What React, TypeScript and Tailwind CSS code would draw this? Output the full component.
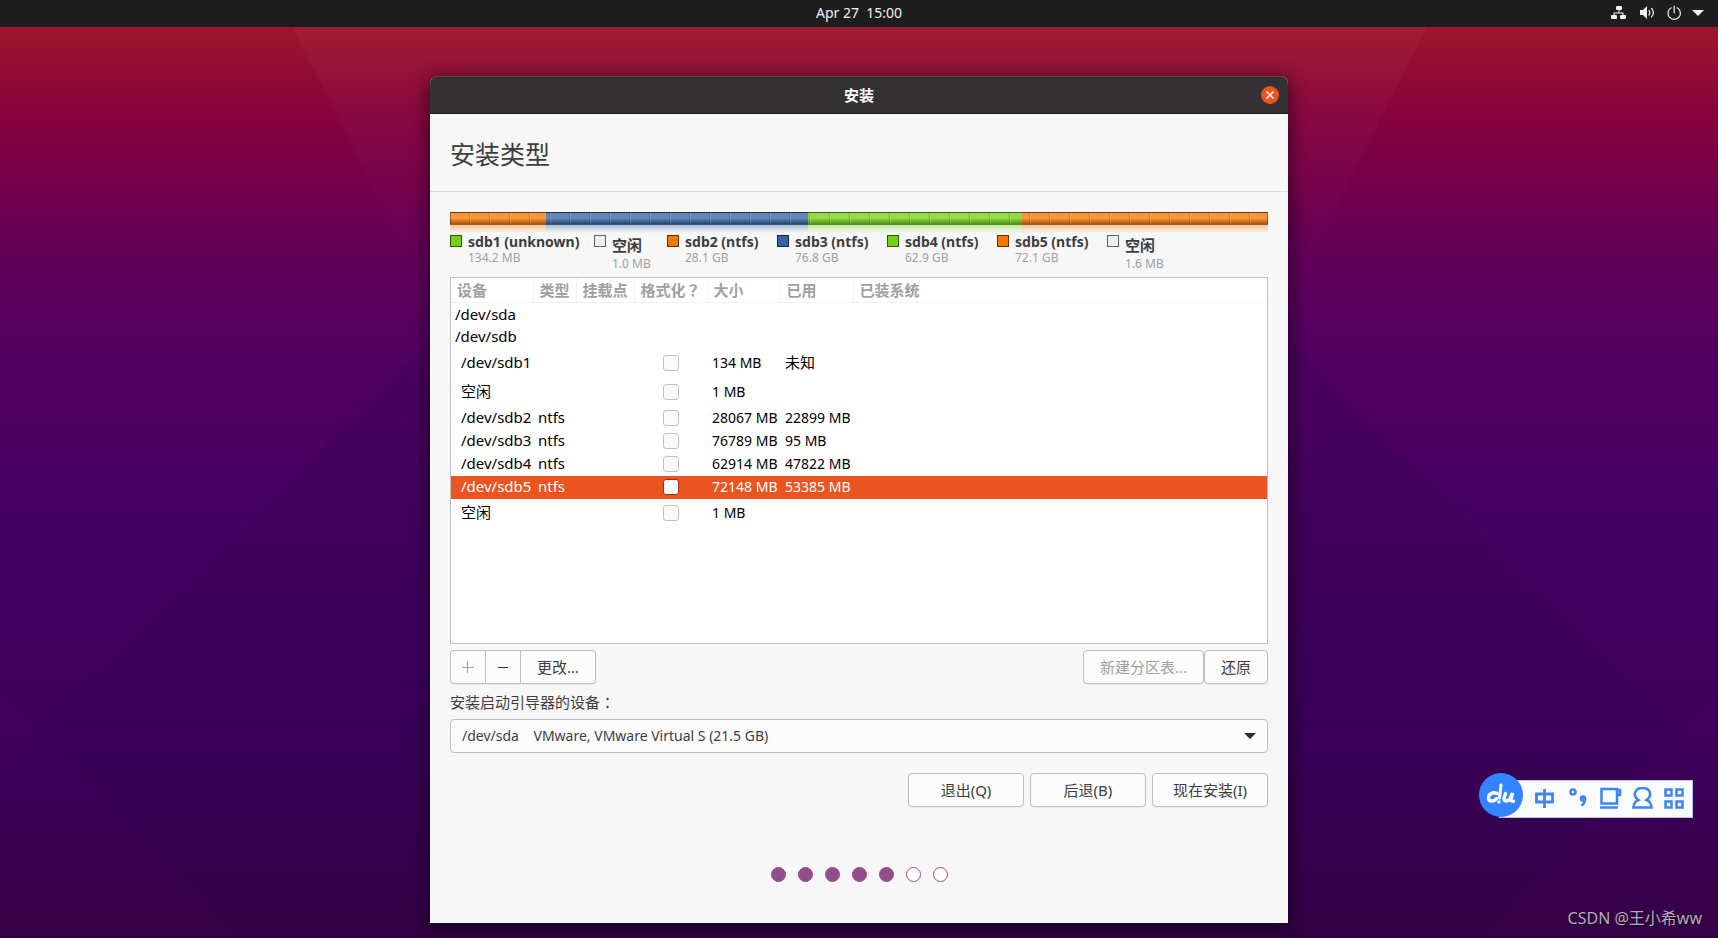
import React, { useState } from 'react';

interface Partition {
  device: string;
  type?: string;
  size?: string;
  used?: string;
  level: 'disk' | 'partition';
  tall?: boolean;
}

const partitions: Partition[] = [
  { device: '/dev/sda', level: 'disk' },
  { device: '/dev/sdb', level: 'disk' },
  { device: '/dev/sdb1', level: 'partition', size: '134 MB', used: '未知', tall: true },
  { device: '空闲', level: 'partition', size: '1 MB', tall: true },
  { device: '/dev/sdb2', level: 'partition', type: 'ntfs', size: '28067 MB', used: '22899 MB' },
  { device: '/dev/sdb3', level: 'partition', type: 'ntfs', size: '76789 MB', used: '95 MB' },
  { device: '/dev/sdb4', level: 'partition', type: 'ntfs', size: '62914 MB', used: '47822 MB' },
  { device: '/dev/sdb5', level: 'partition', type: 'ntfs', size: '72148 MB', used: '53385 MB' },
  { device: '空闲', level: 'partition', size: '1 MB', tall: true },
];

const legend = [
  { name: 'sdb1 (unknown)', size: '134.2 MB', color: 'bg-[#73d216]' },
  { name: '空闲', size: '1.0 MB', color: 'bg-[#eeeeec]', free: true },
  { name: 'sdb2 (ntfs)', size: '28.1 GB', color: 'bg-[#f57900]' },
  { name: 'sdb3 (ntfs)', size: '76.8 GB', color: 'bg-[#3465a4]' },
  { name: 'sdb4 (ntfs)', size: '62.9 GB', color: 'bg-[#73d216]' },
  { name: 'sdb5 (ntfs)', size: '72.1 GB', color: 'bg-[#f57900]' },
  { name: '空闲', size: '1.6 MB', color: 'bg-[#eeeeec]', free: true },
];

const segments = [
  { color: 'bg-[#f57900]', share: 96 },
  { color: 'bg-[#3465a4]', share: 262 },
  { color: 'bg-[#73d216]', share: 214 },
  { color: 'bg-[#f57900]', share: 246 },
];

const columns = [
  { label: '设备', width: 'w-[82px]' },
  { label: '类型', width: 'w-[43px]' },
  { label: '挂载点', width: 'w-[58px]' },
  { label: '格式化', mark: '？', width: 'w-[73px]' },
  { label: '大小', width: 'w-[73px]' },
  { label: '已用', width: 'w-[73px]' },
  { label: '已装系统', width: '' },
];

const buttonStyles =
  'h-[34px] rounded border border-[#bfbfbf] bg-[#fcfcfc] text-[15px] text-[#3d3d3d] shadow-[0_1px_1px_rgba(0,0,0,0.05)] disabled:text-[#a0a0a0]';

const Wallpaper: React.FC = () => (
  <svg
    className="absolute inset-0 -z-10 h-full w-full"
    viewBox="0 0 1718 938"
    preserveAspectRatio="none"
    aria-hidden="true"
  >
    <defs>
      <linearGradient id="sky" x1="0" y1="0" x2="0" y2="1">
        <stop offset="0.02" stopColor="#a01628" />
        <stop offset="0.06" stopColor="#951130" />
        <stop offset="0.12" stopColor="#88033c" />
        <stop offset="0.2" stopColor="#74004a" />
        <stop offset="0.28" stopColor="#600059" />
        <stop offset="0.38" stopColor="#520062" />
        <stop offset="0.56" stopColor="#450062" />
        <stop offset="0.76" stopColor="#3e005c" />
        <stop offset="0.88" stopColor="#3a0053" />
        <stop offset="1" stopColor="#360046" />
      </linearGradient>
      <linearGradient id="facet" x1="0" y1="0" x2="0" y2="1">
        <stop offset="0" stopColor="#fff" stopOpacity="0.03" />
        <stop offset="1" stopColor="#fff" stopOpacity="0" />
      </linearGradient>
    </defs>
    <rect width="1718" height="938" fill="url(#sky)" />
    <path d="M292 27 L430 300 L1290 300 L1427 27 Z" fill="url(#facet)" />
    <path d="M40 732 L427 343 H1291 L1678 732 L1480 938 H240 Z" fill="#1c0040" fillOpacity="0.13" />
    <path d="M0 767 L40 732 L0 698 Z M1718 767 L1678 732 L1718 698 Z" fill="#52005c" fillOpacity="0.15" />
  </svg>
);

const TopBar: React.FC = () => (
  <header className="grid h-[27px] grid-cols-3 items-center bg-[#1d1d1d] px-[14px] pb-0.5 text-[#f2f2f2]">
    <span />
    <time className="text-center text-sm">Apr 27&nbsp; 15:00</time>
    <div className="flex items-center justify-end gap-2">
      <svg width="73" height="16" viewBox="0 0 73 16" aria-hidden="true">
        <g fill="#f2f2f2">
          <rect x="5" y="1" width="6" height="4" rx="1" />
          <rect x="0" y="10" width="6" height="4" rx="1" />
          <rect x="9" y="10" width="6" height="4" rx="1" />
          <path d="M7.5 5h1v2.5h4V10h-1V8.500h-8V10h-1V7.500h5z" />
          <path d="M29 5h3l4-4v13l-4-4h-3z" />
        </g>
        <g fill="none" stroke="#f2f2f2" strokeWidth="1.200" strokeLinecap="round">
          <path d="M38 5.500q1.600 2 0 4.500" />
          <path d="M40.500 3.500q3.600 4 0 8.500" />
          <path d="M60.200 2.800a6.200 6.200 0 1 0 6 0M63.200 1v7" />
        </g>
      </svg>
      <svg width="12" height="6" viewBox="0 0 12 6" aria-hidden="true">
        <path d="M0 0h12L6 6z" fill="#f2f2f2" />
      </svg>
    </div>
  </header>
);

const DiskBar: React.FC = () => (
  <div className="relative">
    <div className="flex h-[13px]">
      {segments.map((segment, index) => (
        <div key={index} className={segment.color} style={{ flexGrow: segment.share }} />
      ))}
    </div>
    <div className="flex h-2 opacity-40 [mask-image:linear-gradient(black,transparent)]">
      {segments.map((segment, index) => (
        <div key={index} className={segment.color} style={{ flexGrow: segment.share }} />
      ))}
    </div>
    <div className="absolute inset-x-0 top-0 h-[13px] border border-black/35 bg-[repeating-linear-gradient(90deg,transparent_0_18px,rgba(0,0,0,0.14)_18px_19px,rgba(255,255,255,0.16)_19px_20px),linear-gradient(rgba(255,255,255,0.2),rgba(255,255,255,0.24)_45%,rgba(0,0,0,0.3))]" />
  </div>
);

const Legend: React.FC = () => (
  <ul className="grid grid-cols-[144px_73px_110px_110px_110px_110px_1fr]">
    {legend.map((item, index) => (
      <li key={index} className="flex gap-[6px]">
        <span className={`mt-[2px] size-3 shrink-0 border border-black/60 ${item.color}`} />
        <div className="whitespace-nowrap">
          <div
            className={`font-bold text-[#3d3d3d] ${
              item.free ? 'text-[15px] leading-6' : 'text-sm leading-[18px]'
            }`}
          >
            {item.name}
          </div>
          <div className="text-xs leading-[14px] text-[#a0a0a0]">{item.size}</div>
        </div>
      </li>
    ))}
  </ul>
);

interface PartitionTableProps {
  selected: number;
  onSelect: (index: number) => void;
}

const PartitionTable: React.FC<PartitionTableProps> = ({ selected, onSelect }) => (
  <div className="h-[367px] overflow-hidden border border-[#c0c0c0] bg-white">
    <table className="w-full table-fixed border-collapse text-left text-sm text-black">
      <thead>
        <tr className="h-6 text-[15px] text-[#a0a0a0]">
          {columns.map(column => (
            <th
              key={column.label}
              className={`border-r border-b border-[#f2f2f2] p-0 pl-[6px] leading-[23px] font-bold whitespace-nowrap last:border-r-0 ${column.width}`}
            >
              {column.label}
              {column.mark && <span className="font-['Noto_Sans_CJK_TC',sans-serif]">{column.mark}</span>}
            </th>
          ))}
        </tr>
      </thead>
      <tbody>
        {partitions.map((row, index) => (
          <tr
            key={index}
            onClick={() => onSelect(index)}
            className={`whitespace-nowrap ${row.tall ? 'h-[29px]' : 'h-[23px]'} ${
              selected === index ? 'bg-[#e95420] text-white' : ''
            }`}
          >
            <td className={`p-0 text-[15px] ${row.level === 'disk' ? 'pl-1' : 'pl-[10px]'}`}>
              {row.device}
            </td>
            <td className="p-0 pl-[5px] text-[15px]">{row.type}</td>
            <td className="p-0" />
            <td className="p-0">
              {row.level === 'partition' && (
                <input
                  type="checkbox"
                  aria-label={`格式化 ${row.device}`}
                  className={`mx-auto block size-4 appearance-none rounded-[3px] border bg-[#fafafa] checked:bg-[#e95420] ${
                    selected === index ? 'border-[#a03010]' : 'border-[#c0c0c0]'
                  }`}
                />
              )}
            </td>
            <td className="p-0 pl-[5px]">{row.size}</td>
            <td className={`p-0 pl-[5px] ${row.used === '未知' ? 'text-[15px]' : ''}`}>{row.used}</td>
            <td className="p-0" />
          </tr>
        ))}
      </tbody>
    </table>
  </div>
);

const InputMethodBar: React.FC = () => (
  <div className="absolute right-[25px] bottom-[120px] flex items-start">
    <div className="z-10 -mr-6 flex size-11 items-center justify-center rounded-full bg-[#3385ff]">
      <svg width="30" height="24" viewBox="0 0 30 24" fill="none" stroke="#fff" strokeWidth="3.400" strokeLinecap="round" aria-hidden="true">
        <path d="M11 10.500c-4-2-8.500.5-8.500 4.500s5.500 4 8 .5" />
        <path d="M15 2l-1.500 13" strokeWidth="3" />
        <circle cx="13" cy="19" r="1" strokeWidth="1.500" />
        <path d="M19.500 10.500l-1.500 5c-.5 3.500 4 3.500 6.500-.5l2-5-1.500 6c-.3 2 1 2.500 2.500 2.300" />
      </svg>
    </div>
    <div className="mt-[7px] flex h-[38px] w-[194px] items-center border border-[#b9c4f5] bg-[#fafbfd] pl-[35px]">
      <svg width="150" height="24" viewBox="0 0 150 24" fill="none" stroke="#3d86ee" strokeWidth="2.500" aria-hidden="true">
        <path d="M1.500 7h16v8h-16zM9.500 2v19" strokeWidth="2.800" />
        <circle cx="38" cy="5" r="2.500" />
        <path d="M50 12c0 3-1 5-3.500 6.500" />
        <circle cx="48" cy="11.500" r="2" fill="#3d86ee" />
        <path d="M66.500 2h15.500v14.500H66.500zM82 3h3v5h-3M65 20.500h18" />
        <path d="M103.500 13c-7-5-3-12 4-12s11 7 4 12c4 1.500 4.500 4 5 7.500H98.500c.5-3.500 1-6 5-7.500z" />
        <path d="M130.500 2.500h6v6h-6zM141.500 2.500h6v6h-6zM130.500 14.500h6v6h-6zM141.500 14.500h6v6h-6z" />
      </svg>
    </div>
  </div>
);

const App: React.FC = () => {
  const [selected, setSelected] = useState(7);

  return (
    <div className="relative isolate min-h-screen font-['Noto_Sans','Noto_Sans_CJK_SC',sans-serif]">
      <Wallpaper />
      <TopBar />

      <main className="mx-auto mt-[49px] w-full max-w-[858px] overflow-hidden rounded-t-lg bg-[#f7f7f7] shadow-[0_4px_16px_4px_rgba(0,0,0,0.45)]">
        <div className="grid h-[38px] grid-cols-[1fr_auto_1fr] items-center border-t border-b border-t-[#4a4a4a] border-b-[#1c1c1c] bg-[#333131] px-[9px]">
          <span />
          <h1 className="text-[15px] font-bold text-white">安装</h1>
          <button
            type="button"
            aria-label="关闭"
            className="flex size-[18px] items-center justify-center justify-self-end rounded-full bg-[#e95420]"
          >
            <svg width="8" height="8" viewBox="0 0 8 8" stroke="#fff" strokeWidth="1.400" aria-hidden="true">
              <path d="M0.500 0.500l7 7M7.500 0.500l-7 7" />
            </svg>
          </button>
        </div>

        <h2 className="flex h-[78px] items-center border-b border-[#dcdcdc] px-5 pt-1 text-[25px] text-[#3d3d3d]">
          安装类型
        </h2>

        <div className="px-5 pt-5">
          <DiskBar />
          <Legend />
          <div className="mt-[6px]">
            <PartitionTable selected={selected} onSelect={setSelected} />
          </div>

          <div className="mt-[6px] flex justify-between">
            <div className="flex">
              <button type="button" disabled aria-label="添加" className={`${buttonStyles} w-[35px] rounded-r-none border-r-0`}>
                <svg width="12" height="12" viewBox="0 0 12 12" className="mx-auto" stroke="#a0a0a0" aria-hidden="true">
                  <path d="M0 6.500h12M5.500 0v12" />
                </svg>
              </button>
              <button type="button" aria-label="删除" className={`${buttonStyles} w-9 rounded-none`}>
                <svg width="12" height="12" viewBox="0 0 12 12" className="mx-auto" stroke="#2e2e2e" aria-hidden="true">
                  <path d="M1 6.500h10" />
                </svg>
              </button>
              <button type="button" className={`${buttonStyles} rounded-l-none border-l-0 px-4`}>
                更改...
              </button>
            </div>
            <div className="flex">
              <button type="button" disabled className={`${buttonStyles} px-4`}>
                新建分区表...
              </button>
              <button type="button" className={`${buttonStyles} px-4`}>
                还原
              </button>
            </div>
          </div>

          <label htmlFor="boot-device" className="mt-[6px] block text-[15px] leading-6 text-[#3d3d3d]">
            安装启动引导器的设备<span className="font-['Noto_Sans_CJK_TC',sans-serif]">：</span>
          </label>
          <div className="relative mt-[5px]">
            <select
              id="boot-device"
              className="h-[34px] w-full appearance-none rounded border border-[#bfbfbf] bg-[#fcfcfc] px-[11px] text-sm text-[#3d3d3d]"
            >
              <option>/dev/sda&nbsp;&nbsp;&nbsp; VMware, VMware Virtual S (21.5 GB)</option>
            </select>
            <svg
              width="12"
              height="6"
              viewBox="0 0 12 6"
              className="pointer-events-none absolute top-[14px] right-3"
              aria-hidden="true"
            >
              <path d="M0 0h12L6 6z" fill="#2e2e2e" />
            </svg>
          </div>

          <div className="mt-5 flex justify-end gap-[6px]">
            <button type="button" className={`${buttonStyles} w-[116px]`}>退出(Q)</button>
            <button type="button" className={`${buttonStyles} w-[116px]`}>后退(B)</button>
            <button type="button" className={`${buttonStyles} w-[116px]`}>现在安装(I)</button>
          </div>

          <div className="flex justify-center gap-3 pt-[60px] pb-[41px]">
            {[0, 1, 2, 3, 4, 5, 6].map(step => (
              <span
                key={step}
                className={`size-[15px] rounded-full border border-[#924d8b] ${step < 5 ? 'bg-[#924d8b]' : 'bg-white'}`}
              />
            ))}
          </div>
        </div>
      </main>

      <InputMethodBar />
      <p className="absolute right-4 bottom-2 text-base text-[#b5adbb] [text-shadow:1px_1px_1px_rgba(0,0,0,0.6)]">
        CSDN @王小希ww
      </p>
    </div>
  );
};

export default App;
